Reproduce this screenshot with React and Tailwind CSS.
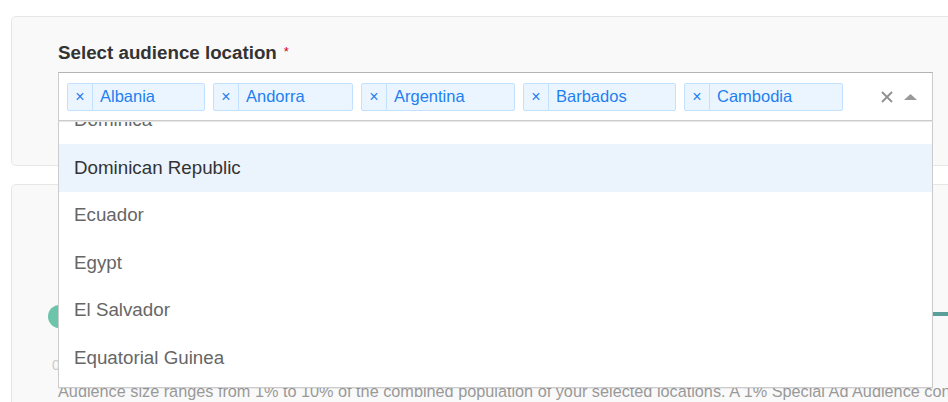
import React from "react";

const tags = [
  { name: "Albania", w: 138 },
  { name: "Andorra", w: 140 },
  { name: "Argentina", w: 154 },
  { name: "Barbados", w: 153 },
  { name: "Cambodia", w: 159 },
];

const options = [
  { name: "Dominica" },
  { name: "Dominican Republic", focused: true },
  { name: "Ecuador" },
  { name: "Egypt" },
  { name: "El Salvador" },
  { name: "Equatorial Guinea" },
  { name: "Eritrea" },
];

function Tag({ name, w }) {
  return (
    <div
      className="flex h-[28px] shrink-0 items-stretch rounded-[2px] border border-[#c2e0ff] bg-[#ebf5ff] text-[#1f7ff0]"
      style={{ width: w }}
    >
      <span className="flex w-[25px] items-center justify-center border-r border-[#c2e0ff] text-[16px] leading-none">
        ×
      </span>
      <span className="flex items-center pl-[7px] text-[16.5px] leading-none">{name}</span>
    </div>
  );
}

export default function App() {
  return (
    <div className="relative h-[402px] w-[948px] overflow-hidden bg-white font-['Liberation_Sans',Arial,sans-serif]">
      <div className="pl-[11px] pt-[16px]">
        {/* Card 1 */}
        <div className="h-[150px] w-[960px] rounded-[5px] border border-[#e6e6e6] bg-[#f9f9f9] pl-[46px] pt-[24px]">
          <div className="flex items-start text-[18.75px] font-bold leading-[24px] text-[#333]">
            <span>Select audience location</span>
            <span className="ml-[7px] mt-[4px] text-[13px] font-normal leading-[14px] text-[#d0021b]">*</span>
          </div>
          <div className="relative mt-[7px] w-[875px]">
            <div className="flex h-[49px] items-center border border-[#ccc] border-t-[#b3b3b3] bg-white pl-[8px]">
              <div className="flex gap-[8px]">
                {tags.map((t) => (
                  <Tag key={t.name} {...t} />
                ))}
              </div>
              <div className="ml-auto flex items-center gap-[11px] pr-[15px]">
                <svg width="12" height="12" viewBox="0 0 12 12">
                  <path d="M1 1 L11 11 M11 1 L1 11" stroke="#8f8f8f" strokeWidth="1.8" />
                </svg>
                <svg width="13" height="6" viewBox="0 0 13 6">
                  <path d="M0 6 L6.5 0 L13 6 Z" fill="#999" />
                </svg>
              </div>
            </div>
            {/* Menu */}
            <div className="absolute left-0 top-full z-10 h-[267px] w-[875px] overflow-hidden border border-t-[#e6e6e6] border-x-[#ccc] border-b-[#ccc] bg-white shadow-[0_1px_0_rgba(0,0,0,0.06)]">
              <div className="mt-[-25.5px]">
                {options.map((o) => (
                  <div
                    key={o.name}
                    className={
                      o.focused
                        ? "flex h-[47.5px] items-center bg-[#ebf3fd] pl-[15px] text-[18.75px] text-[#333]"
                        : "flex h-[47.5px] items-center pl-[15px] text-[18.75px] text-[#666]"
                    }
                  >
                    {o.name}
                  </div>
                ))}
              </div>
            </div>
          </div>
        </div>

        {/* Card 2 */}
        <div className="mt-[18px] h-[260px] w-[960px] rounded-[5px] border border-[#e6e6e6] bg-[#f9f9f9] pt-[120px]">
          <div className="flex items-start pl-[36px]">
            <div className="h-[23px] w-[23px] shrink-0 rounded-full bg-[#6cc5ab]" />
            <div className="mt-[7px] h-[4px] flex-1 bg-[#5b9f9b]" />
          </div>
          <div className="mt-[27px] pl-[40px] text-[14px] leading-[20px] text-[#ccc]">0</div>
          <div className="mt-[6px] whitespace-nowrap pl-[46px] text-[16.25px] leading-[20px] text-[#999]">
            Audience size ranges from 1% to 10% of the combined population of your selected locations. A 1% Special Ad Audience consists of the people most similar to your source audience.
          </div>
        </div>
      </div>
    </div>
  );
}
